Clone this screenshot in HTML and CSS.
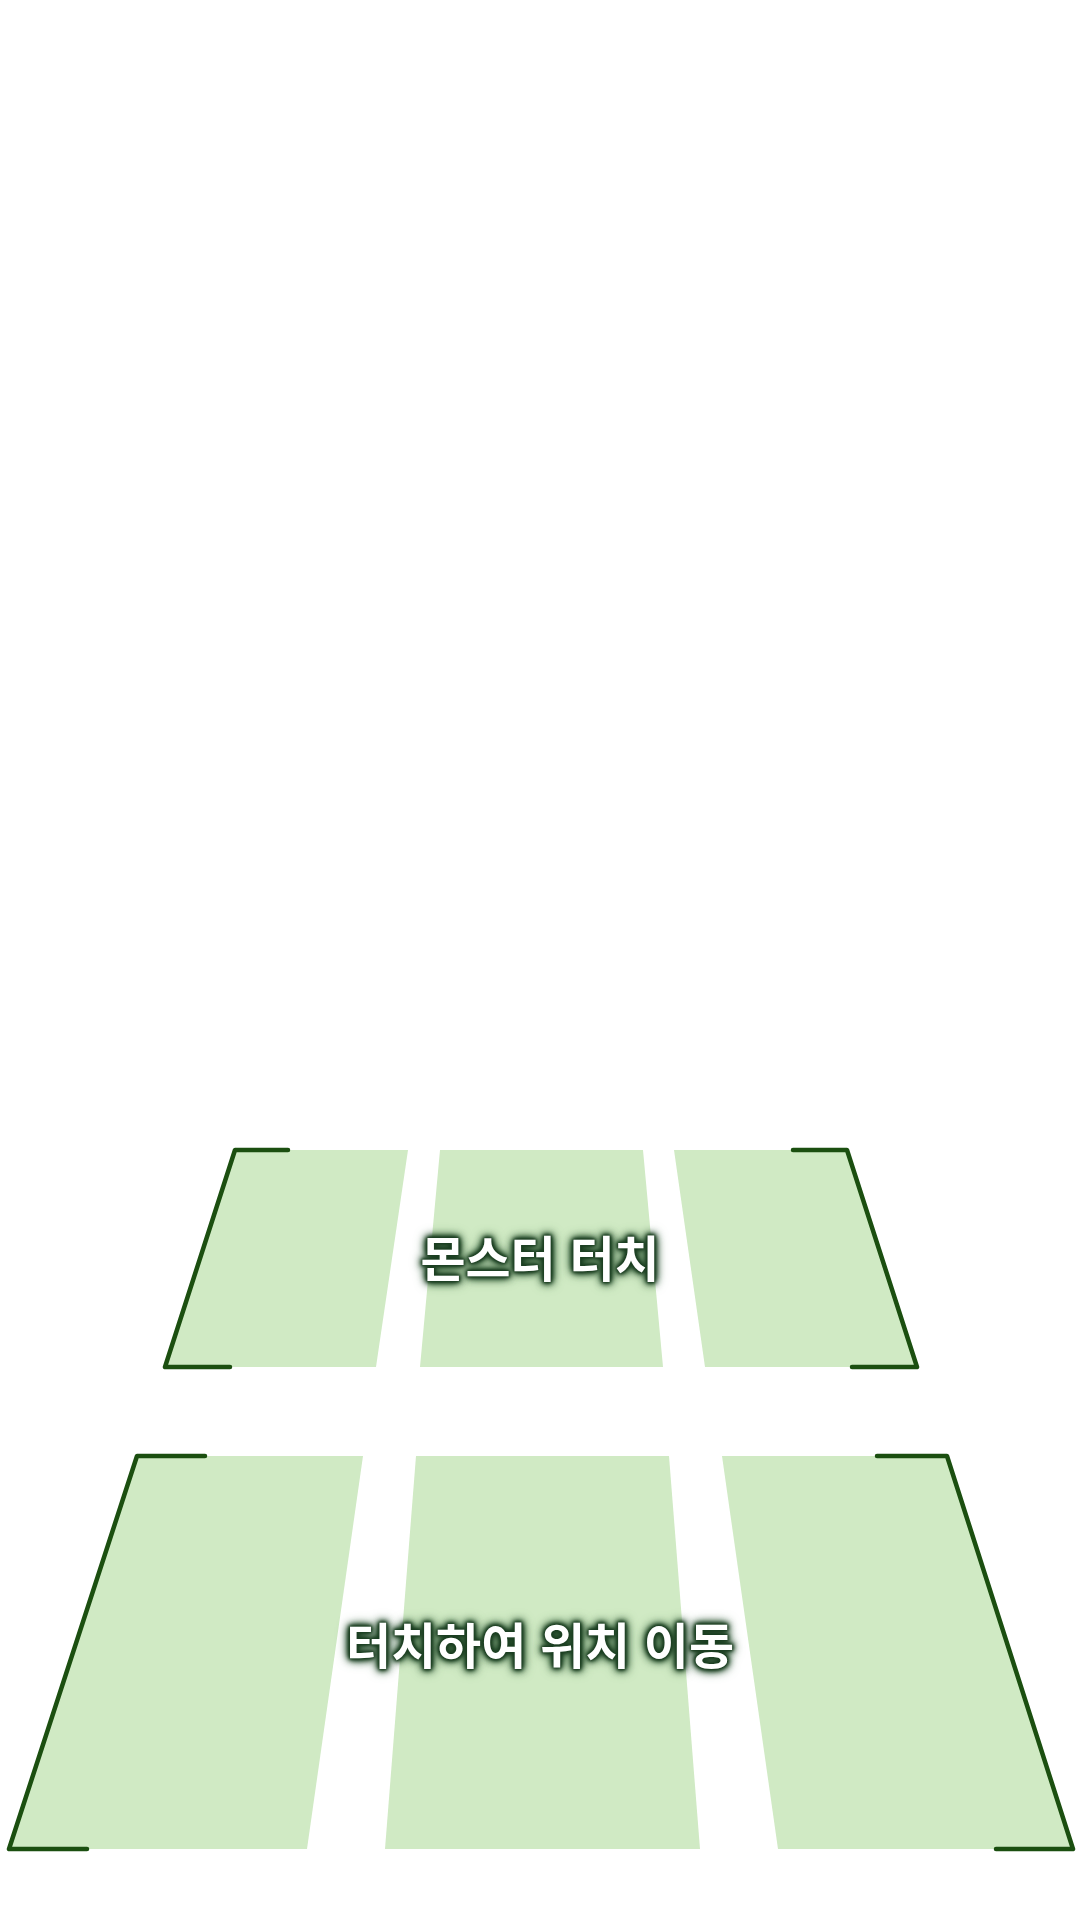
FILE: index.html
```html
<!DOCTYPE html>
<html lang="ko">
<head>
<meta charset="utf-8">
<title>Touch zones</title>
<link rel="stylesheet" href="styles.css">
</head>
<body>
<main class="screen">
  <div class="spacer"></div>
  <section class="zone zone-top">
    <svg class="zone-svg" width="1080" height="240" viewBox="0 1140 1080 240">
      <polygon class="pad" points="235,1150 408,1150 376,1367 165,1367"/>
      <polygon class="pad" points="440,1150 643,1150 663,1367 420,1367"/>
      <polygon class="pad" points="674,1150 847,1150 917,1367 705,1367"/>
      <polyline class="corner" points="288,1150 235,1150 165,1367 230,1367"/>
      <polyline class="corner" points="793,1150 847,1150 917,1367 852,1367"/>
    </svg>
    <div class="label label-top">몬스터 터치</div>
  </section>
  <section class="zone zone-bottom">
    <svg class="zone-svg" width="1080" height="414" viewBox="0 1446 1080 414">
      <polygon class="pad" points="137,1456 363,1456 307,1849 9,1849"/>
      <polygon class="pad" points="416,1456 669,1456 700,1849 385,1849"/>
      <polygon class="pad" points="722,1456 947,1456 1073,1849 778,1849"/>
      <polyline class="corner" points="205,1456 137,1456 9,1849 87,1849"/>
      <polyline class="corner" points="877,1456 947,1456 1073,1849 996,1849"/>
    </svg>
    <div class="label label-bottom">터치하여 위치 이동</div>
  </section>
</main>
</body>
</html>
```
FILE: styles.css
```css
html, body {
  margin: 0;
  padding: 0;
  background: #ffffff;
}

.screen {
  width: 1080px;
  height: 1920px;
  display: flex;
  flex-direction: column;
  overflow: hidden;
  background: #ffffff;
}

.spacer {
  flex: 0 0 1140px;
}

.zone {
  position: relative;
  width: 1080px;
}

.zone-top {
  height: 240px;
}

.zone-bottom {
  height: 414px;
  margin-top: 66px;
}

.zone-svg {
  display: block;
}

.pad {
  fill: #d0eac4;
}

.corner {
  fill: none;
  stroke: #1b4f10;
  stroke-width: 4.5;
  stroke-linecap: round;
  stroke-linejoin: round;
}

.label {
  position: absolute;
  left: 0;
  right: 0;
  text-align: center;
  font-family: "Noto Sans CJK KR", "Noto Sans", sans-serif;
  font-weight: 700;
  font-size: 49px;
  line-height: 64px;
  color: #ffffff;
  text-shadow:
    0 0 2px #1c3f22,
    0 0 3px #1c3f22,
    0 0 4px #1c3f22,
    0 0 5px #1c3f22,
    0 0 6px #1c3f22,
    0 0 8px #1c3f22,
    0 0 10px #23502b,
    0 0 13px #2f6038;
}

.label-top {
  top: 84px;
}

.label-bottom {
  top: 165px;
}
```
